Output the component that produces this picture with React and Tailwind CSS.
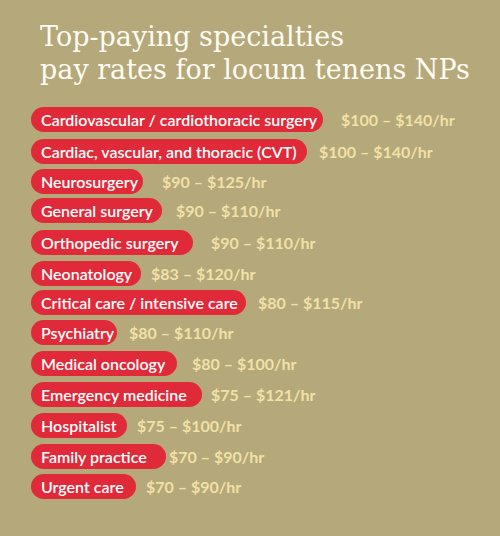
import React from 'react';

const rows = [
    { name: 'Cardiovascular / cardiothoracic surgery', rate: '$100 – $140/hr', w: 'w-[292px]', gap: 'ml-[18px]', mt: 'mt-0' },
    { name: 'Cardiac, vascular, and thoracic (CVT)', rate: '$100 – $140/hr', w: 'w-[276px]', gap: 'ml-[12px]', mt: 'mt-[7px]' },
    { name: 'Neurosurgery', rate: '$90 – $125/hr', w: 'w-[112px]', gap: 'ml-[19px]', mt: 'mt-[5px]' },
    { name: 'General surgery', rate: '$90 – $110/hr', w: 'w-[131px]', gap: 'ml-[14px]', mt: 'mt-[4px]' },
    { name: 'Orthopedic surgery', rate: '$90 – $110/hr', w: 'w-[162px]', gap: 'ml-[18px]', mt: 'mt-[7px]' },
    { name: 'Neonatology', rate: '$83 – $120/hr', w: 'w-[110px]', gap: 'ml-[10px]', mt: 'mt-[6px]' },
    { name: 'Critical care / intensive care', rate: '$80 – $115/hr', w: 'w-[215px]', gap: 'ml-[12px]', mt: 'mt-[4px]' },
    { name: 'Psychiatry', rate: '$80 – $110/hr', w: 'w-[86px]', gap: 'ml-[12px]', mt: 'mt-[5px]' },
    { name: 'Medical oncology', rate: '$80 – $100/hr', w: 'w-[146px]', gap: 'ml-[15px]', mt: 'mt-[6px]' },
    { name: 'Emergency medicine', rate: '$75 – $121/hr', w: 'w-[171px]', gap: 'ml-[9px]', mt: 'mt-[6px]' },
    { name: 'Hospitalist', rate: '$75 – $100/hr', w: 'w-[96px]', gap: 'ml-[10px]', mt: 'mt-[6px]' },
    { name: 'Family practice', rate: '$70 – $90/hr', w: 'w-[135px]', gap: 'ml-[3px]', mt: 'mt-[6px]' },
    { name: 'Urgent care', rate: '$70 – $90/hr', w: 'w-[105px]', gap: 'ml-[10px]', mt: 'mt-[5px]' },
];

export default function App() {
    return (
        <div className="w-[500px] h-[536px] bg-[#b5a87b] overflow-hidden">
            {/* Title */}
            <h1 className="pt-[20px] pl-[40px] text-[27px] leading-[33px] text-[#fffcf2] font-['DejaVu_Serif',serif]">
                Top-paying specialties<br />
                pay rates for locum tenens NPs
            </h1>

            {/* Specialty list */}
            <div className="mt-[21px] pl-[31px] flex flex-col font-['Lato',sans-serif]">
                {rows.map((r, i) => (
                    <div key={i} className={`flex items-center ${r.mt}`}>
                        <div className={`${r.w} h-[25px] shrink-0 rounded-full bg-[#e02a39] pl-[10px] flex items-center text-white text-[16px] font-semibold whitespace-nowrap`}>
                            {r.name}
                        </div>
                        <span className={`${r.gap} text-[16px] font-bold text-[#f1e1a6] whitespace-nowrap`}>{r.rate}</span>
                    </div>
                ))}
            </div>
        </div>
    );
}
